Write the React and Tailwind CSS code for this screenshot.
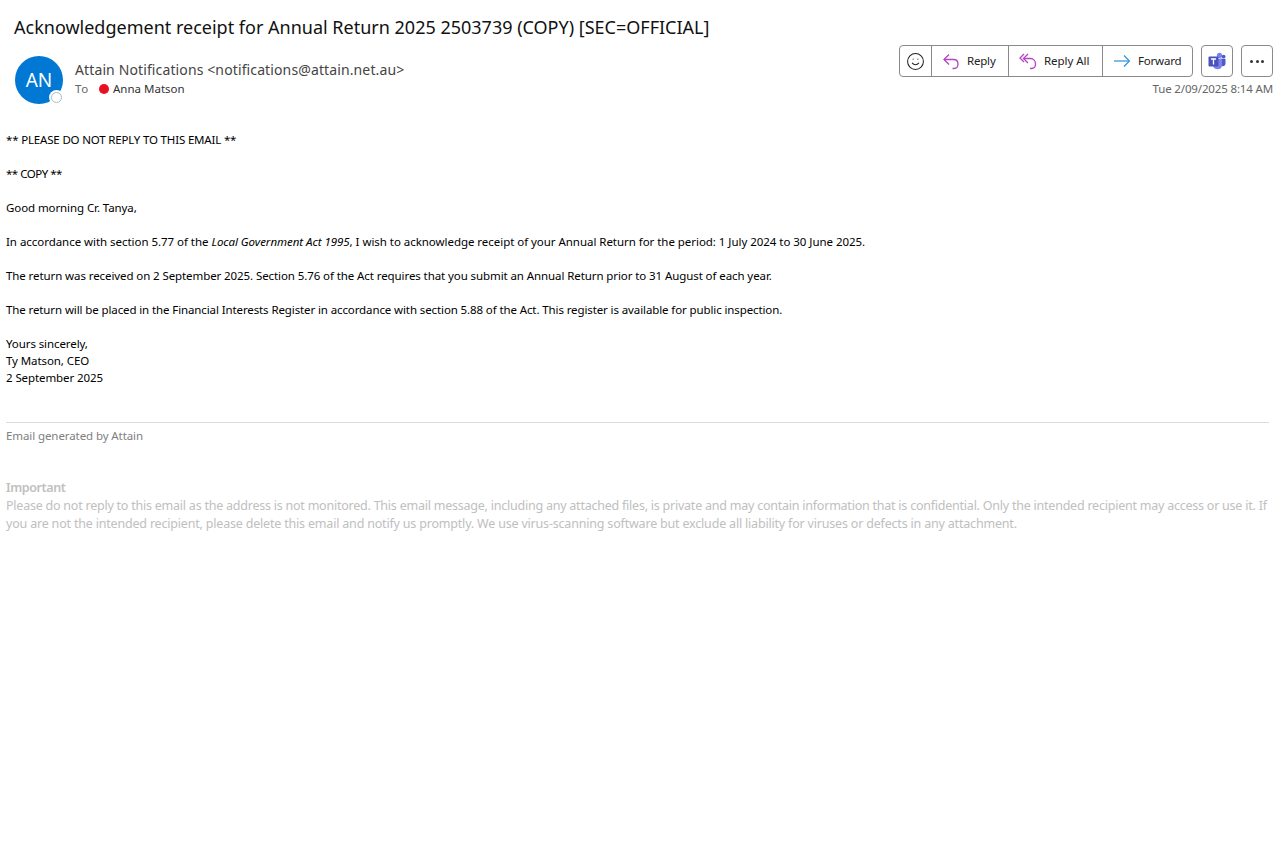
import { Smile } from "lucide-react";

const font = { fontFamily: '"Noto Sans", sans-serif' };

function ReplyIcon() {
  return (
    <svg width="18" height="18" viewBox="0 0 18 18" fill="none" stroke="#b146c2" strokeWidth="1.3">
      <path d="M7 2.5 L2 7.5 L7 12.5" />
      <path d="M2 7.5 H11.5 C14.5 7.5 16 9.5 16 12 C16 14.5 14.5 16.5 12 16.5 H10.5" />
    </svg>
  );
}

function ReplyAllIcon() {
  return (
    <svg width="18" height="18" viewBox="0 0 18 18" fill="none" stroke="#b146c2" strokeWidth="1.3">
      <path d="M5 2 L1 6 L5 10" />
      <path d="M9 2 L4.5 6.5 L9 11" />
      <path d="M4.5 6.5 H11.5 C14.5 6.5 16.5 9 16.5 12 C16.5 14.5 15 16.5 12.5 16.5 H11" />
    </svg>
  );
}

function ForwardIcon() {
  return (
    <svg width="16" height="14" viewBox="0 0 16 14" fill="none" stroke="#2b8fd8" strokeWidth="1.2">
      <path d="M0 7 H15" />
      <path d="M10 1.5 L15.5 7 L10 12.5" />
    </svg>
  );
}

function TeamsIcon() {
  return (
    <svg width="18" height="18" viewBox="0 0 18 18">
      <circle cx="11.5" cy="3.4" r="2.6" fill="#7b83eb" />
      <circle cx="15.6" cy="4.6" r="1.9" fill="#5059c9" />
      <path d="M12 6.8 H17.5 V11.5 C17.5 13.2 16.2 14.2 14.8 14.2 C13.2 14.2 12 13.2 12 11.5 Z" fill="#5059c9" />
      <path d="M5 6.8 H14 V13.5 C14 15.8 12.2 17.2 9.8 17.2 C7.2 17.2 5 15.6 5 13.5 Z" fill="#7b83eb" />
      <rect x="0.5" y="4.5" width="10" height="10" rx="1" fill="#4b53bc" />
      <path d="M3 7 H8 M5.5 7 V12.5" stroke="#fff" strokeWidth="1.3" fill="none" />
    </svg>
  );
}

export default function App() {
  return (
    <div className="min-h-[852px] bg-white text-black overflow-hidden" style={font}>
      <div className="pl-[14px] pt-[15px] h-[45px] text-[18px] leading-[24px] text-[#111]">
        Acknowledgement receipt for Annual Return 2025 2503739 (COPY) [SEC=OFFICIAL]
      </div>

      <div className="flex justify-between pl-[15px] pr-[15px]">
        <div className="flex mt-[11px]">
          <div className="relative w-[48px] h-[48px] rounded-full bg-[#0078d4] text-white flex items-center justify-center text-[19px]">
            AN
            <div className="absolute right-[-1px] bottom-[-1px] w-[15px] h-[15px] rounded-full bg-white flex items-center justify-center">
              <div className="w-[11px] h-[11px] rounded-full border border-[#a9bcc6]"></div>
            </div>
          </div>
          <div className="ml-[12px] mt-[4px]">
            <div className="text-[14px] leading-[20px] text-[#444] tracking-[0.12px]">
              Attain Notifications &lt;notifications@attain.net.au&gt;
            </div>
            <div className="flex items-center text-[11.5px] leading-[17px] text-[#333]">
              <span className="text-[#666] w-[14px] tracking-[0.6px]">To</span>
              <span className="w-[10px] h-[10px] rounded-full bg-[#e81123] ml-[10px] mr-[4px]"></span>
              <span>Anna Matson</span>
            </div>
          </div>
        </div>

        <div className="flex flex-col items-end">
          <div className="flex">
            <div className="flex h-[32px] border border-[#8a8a8a] rounded-[4px] text-[11.5px] text-[#222]">
              <div className="w-[32px] flex items-center justify-center border-r border-[#8a8a8a]">
                <Smile size={19} strokeWidth={1.3} className="text-[#222] -ml-[1px]" />
              </div>
              <div className="w-[77px] flex items-center pl-[10px] gap-[7px] border-r border-[#8a8a8a] tracking-[-0.2px]">
                <ReplyIcon />
                Reply
              </div>
              <div className="w-[94px] flex items-center pl-[10px] gap-[7px] border-r border-[#8a8a8a] tracking-[-0.05px]">
                <ReplyAllIcon />
                Reply All
              </div>
              <div className="w-[89px] flex items-center pl-[11px] gap-[8px] tracking-[-0.2px]">
                <ForwardIcon />
                Forward
              </div>
            </div>
            <div className="w-[32px] h-[32px] ml-[8px] border border-[#8a8a8a] rounded-[4px] flex items-center justify-center">
              <TeamsIcon />
            </div>
            <div className="w-[32px] h-[32px] ml-[8px] border border-[#8a8a8a] rounded-[4px] flex items-center justify-center gap-[2.5px]">
              <span className="w-[3px] h-[3px] rounded-full bg-[#333]"></span>
              <span className="w-[3px] h-[3px] rounded-full bg-[#333]"></span>
              <span className="w-[3px] h-[3px] rounded-full bg-[#333]"></span>
            </div>
          </div>
          <div className="mt-[3px] text-[11.5px] leading-[17px] text-[#666] tracking-[-0.15px]">Tue 2/09/2025 8:14 AM</div>
        </div>
      </div>

      <div className="mt-[27px] px-[6px] pr-[19px] text-[11.5px] leading-[17px] tracking-[-0.09px]">
        <p className="tracking-[-0.17px]">** PLEASE DO NOT REPLY TO THIS EMAIL **</p>
        <p className="mt-[17px] tracking-[-0.5px]">** COPY **</p>
        <p className="mt-[17px]">Good morning Cr. Tanya,</p>
        <p className="mt-[17px] tracking-[-0.04px]">
          In accordance with section 5.77 of the <em>Local Government Act 1995</em>, I wish to acknowledge receipt of your Annual Return for the period: 1 July 2024 to 30 June 2025.
        </p>
        <p className="mt-[17px]">The return was received on 2 September 2025. Section 5.76 of the Act requires that you submit an Annual Return prior to 31 August of each year.</p>
        <p className="mt-[17px] tracking-[-0.11px]">The return will be placed in the Financial Interests Register in accordance with section 5.88 of the Act. This register is available for public inspection.</p>
        <p className="mt-[17px]">Yours sincerely,</p>
        <p>Ty Matson, CEO</p>
        <p>2 September 2025</p>
        <div className="mt-[36px] border-t border-[#ddd]"></div>
        <p className="mt-[4px] text-[#808080]">Email generated by Attain</p>
      </div>

      <div className="mt-[35px] pl-[6px] pr-[10px] text-[12.5px] leading-[18px] text-[#c0c0c0] tracking-[-0.19px]">
        <p className="font-semibold tracking-[-0.4px]">Important</p>
        <p>
          <span className="block tracking-[-0.23px]">
            Please do not reply to this email as the address is not monitored. This email message, including any attached files, is private and may contain information that is confidential. Only the intended recipient may access or use it. If
          </span>
          <span className="block">
            you are not the intended recipient, please delete this email and notify us promptly. We use virus-scanning software but exclude all liability for viruses or defects in any attachment.
          </span>
        </p>
      </div>
    </div>
  );
}
